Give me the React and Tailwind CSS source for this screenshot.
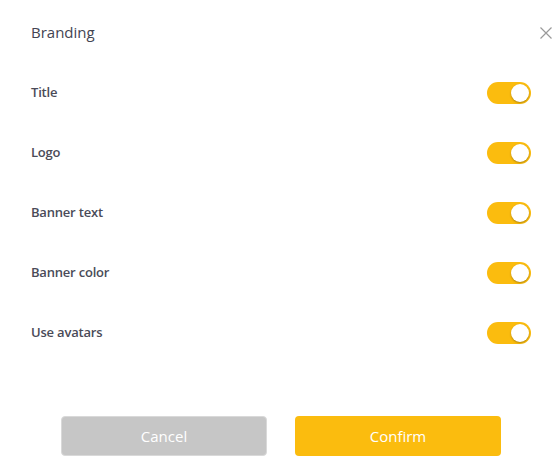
export default function App() {
  const rows = ["Title", "Logo", "Banner text", "Banner color", "Use avatars"];
  return (
    <div className="w-[556px] h-[473px] bg-white" style={{ fontFamily: '"Open Sans", "Noto Sans", sans-serif' }}>
      <div className="h-[63px] flex items-center justify-between pl-[31px] pr-[4px]">
        <span className="text-[15px] font-medium text-[#434452] mt-[2px]">Branding</span>
        <svg width="12" height="12" viewBox="0 0 12 12" className="mt-[3px]">
          <path d="M0.5 0.5 L11.5 11.5 M11.5 0.5 L0.5 11.5" stroke="#9a9a9a" strokeWidth="1.2" fill="none" />
        </svg>
      </div>
      <div className="flex flex-col">
        {rows.map((r) => (
          <div key={r} className="h-[60px] flex items-center justify-between pl-[31px] pr-[25px]">
            <span className="text-[13px] font-semibold text-[#4a4b58] tracking-[-0.2px]">{r}</span>
            <div className="w-[44px] h-[22px] rounded-full bg-[#fbbc0e] flex items-center justify-end pr-[2px]">
              <div className="w-[18px] h-[18px] rounded-full bg-white shadow-[0_1px_2px_rgba(0,0,0,0.3)]" />
            </div>
          </div>
        ))}
      </div>
      <div className="flex gap-[28px] pl-[61px] mt-[53px]">
        <button className="w-[206px] h-[40px] rounded-[4px] bg-[#c6c6c6] border border-[#d9d9d9] text-white text-[15px]">Cancel</button>
        <button className="w-[206px] h-[40px] rounded-[4px] bg-[#fbbc0e] text-white text-[15px]">Confirm</button>
      </div>
    </div>
  );
}
